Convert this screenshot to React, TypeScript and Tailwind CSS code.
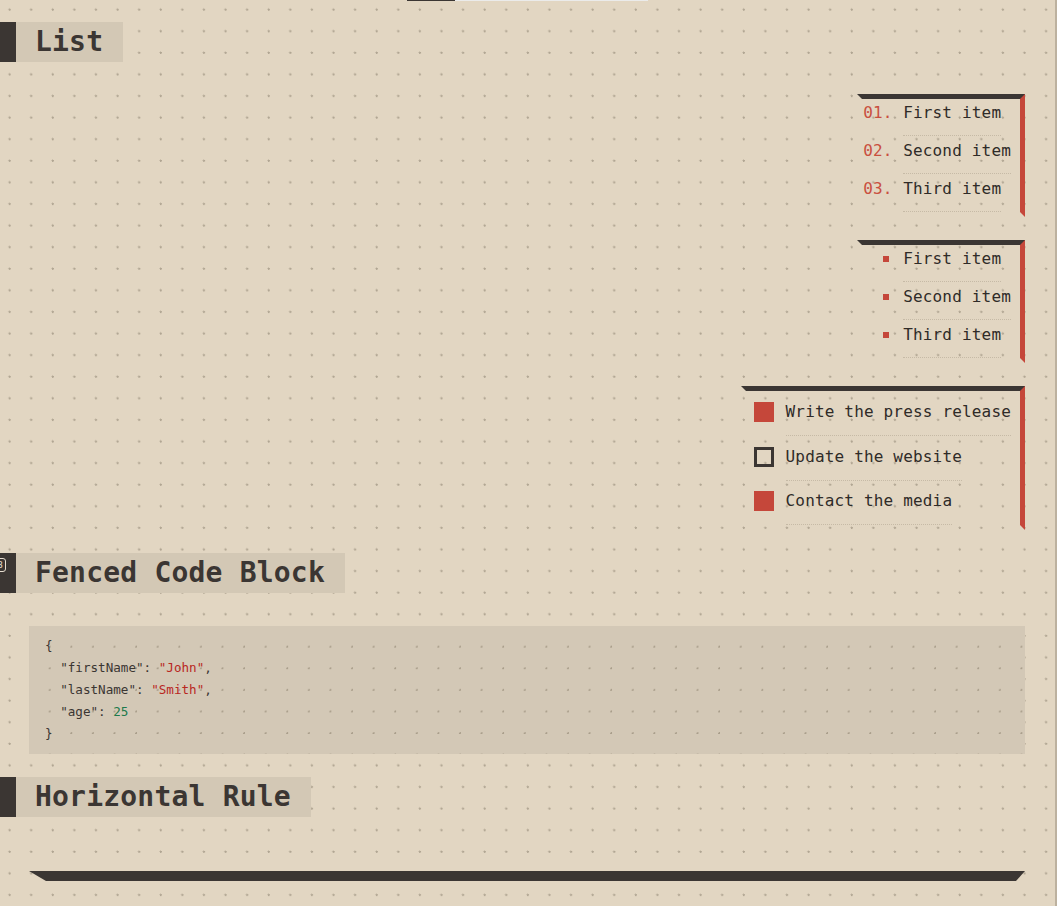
const orderedItems = ["First item", "Second item", "Third item"];

const tasks = [
  { text: "Write the press release", done: true },
  { text: "Update the website", done: false },
  { text: "Contact the media", done: true },
];

const listBox =
  "self-end border-[5px] border-t-[#3b3633] border-r-[#c5473a] border-b-transparent border-l-transparent";

const Heading = ({ title, tag }: { title: string; tag?: string }) => (
  <div className="-ml-[29px] flex h-10 w-fit">
    <div className="relative w-4 bg-[#3b3633]">
      {tag && (
        <span className="absolute -left-[11px] top-[5px] flex h-[14px] items-center rounded-[3px] border border-[#e6ddd0] px-[2px] text-[9px] leading-none text-[#e6ddd0]">
          {tag}
        </span>
      )}
    </div>
    <h2 className="bg-[#d3c8b5] pl-[19px] pr-[20px] text-[28px] font-bold leading-10 tracking-[0.2px] text-[#3b3633]">
      {title}
    </h2>
  </div>
);

const Str = ({ children }: { children: string }) => (
  <span className="text-[#b9271f]">{children}</span>
);

const App = () => {
  return (
    <div className="min-h-screen bg-[#e2d6c2] bg-[radial-gradient(circle_at_9.5px_9.5px,#b1a693_0.9px,transparent_1.4px)] bg-[length:21.6px_21.6px] font-['DejaVu_Sans_Mono',monospace] text-[#2f2b28]">
      {/* reading progress + page edge */}
      <div className="fixed left-[407px] top-0 flex h-px">
        <div className="w-12 bg-[#3b3633]" />
        <div className="w-[193px] bg-[#ebebea]" />
      </div>
      <div className="fixed bottom-0 right-0 top-0 w-[2px] bg-[#bcb19f]" />

      <div className="flex flex-col pb-5 pl-[29px] pr-[32px] pt-[22px]">
        <Heading title="List" />

        <div className="mt-8 flex flex-col gap-[23px] text-[16px] leading-6 tracking-[0.17px]">
          <ol className={`${listBox} flex flex-col gap-[3px] pl-px pr-[9px] pt-[2px]`}>
            {orderedItems.map((item, i) => (
              <li key={item} className="flex items-start">
                <span className="w-10 text-[#c94f3f]">0{i + 1}.</span>
                <span className="border-b border-dotted border-[#c6baa6] pb-[10px]">
                  {item}
                </span>
              </li>
            ))}
          </ol>

          <ul className={`${listBox} flex flex-col gap-[3px] pl-px pr-[9px] pt-[2px]`}>
            {orderedItems.map((item) => (
              <li key={item} className="flex items-start">
                <span className="flex h-6 w-10 items-center">
                  <span className="ml-5 h-1.5 w-1.5 bg-[#c5473a]" />
                </span>
                <span className="border-b border-dotted border-[#c6baa6] pb-[10px]">
                  {item}
                </span>
              </li>
            ))}
          </ul>

          <ul className={`${listBox} flex flex-col gap-[8.5px] pl-2 pr-[9px] pt-[9px]`}>
            {tasks.map((t) => (
              <li key={t.text} className="flex items-start gap-3">
                <span className="flex h-6 items-center">
                  {t.done ? (
                    <span className="h-5 w-5 bg-[#c5473a]" />
                  ) : (
                    <span className="h-5 w-5 border-[3px] border-[#3b3633]" />
                  )}
                </span>
                <span className="border-b border-dotted border-[#c6baa6] pb-[11px]">
                  {t.text}
                </span>
              </li>
            ))}
          </ul>
        </div>

        <div className="mt-[23px]">
          <Heading title="Fenced Code Block" tag="h3" />
        </div>

        <pre className="mt-[33px] bg-[#d3c8b6] bg-[radial-gradient(circle_at_21px_21px,#a99e8b_0.9px,transparent_1.4px)] bg-[length:21.6px_21.6px] px-4 py-[9px] font-['DejaVu_Sans_Mono',monospace] text-[12.6px] leading-[22px] text-[#3b3633]">
          <div>{"{"}</div>
          <div>
            {'  "firstName": '}
            <Str>"John"</Str>,
          </div>
          <div>
            {'  "lastName": '}
            <Str>"Smith"</Str>,
          </div>
          <div>
            {'  "age": '}
            <span className="text-[#1d7a4c]">25</span>
          </div>
          <div>{"}"}</div>
        </pre>

        <div className="mt-[23px]">
          <Heading title="Horizontal Rule" />
        </div>

        <hr className="mt-[54px] h-0 border-0 border-l-[17px] border-r-[9px] border-t-[10px] border-l-transparent border-r-transparent border-t-[#3b3633]" />
      </div>
    </div>
  );
};

export default App;
